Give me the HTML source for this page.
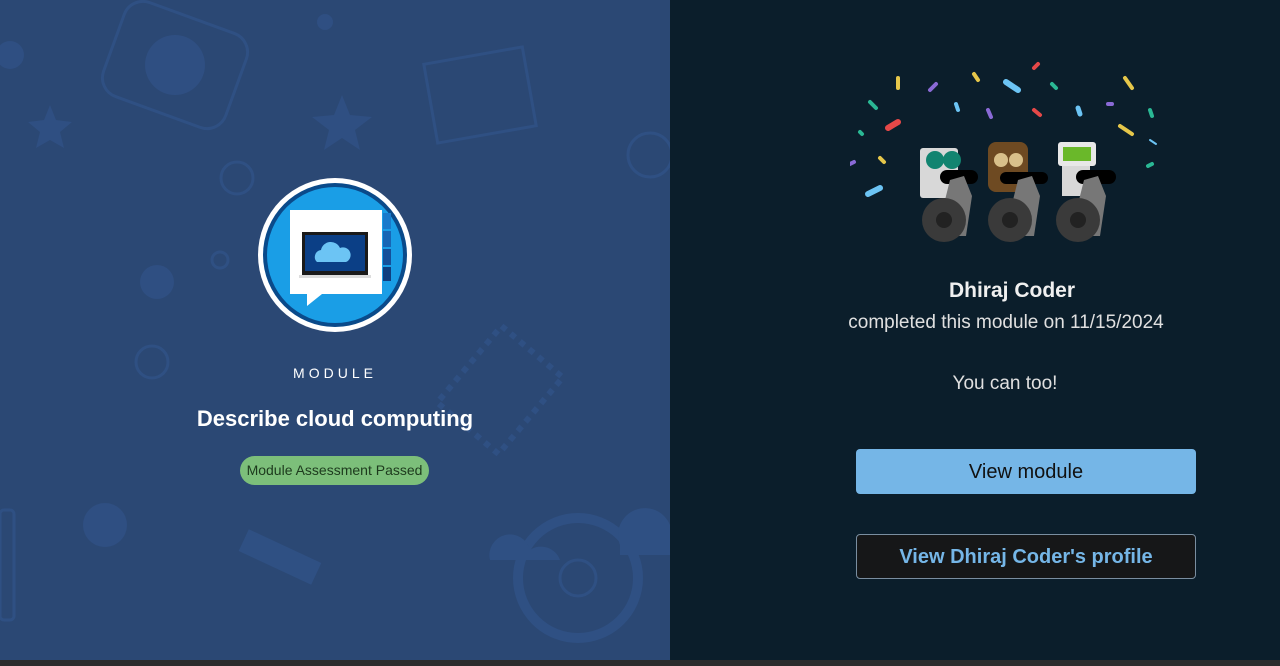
<!DOCTYPE html>
<html><head><meta charset="utf-8"><style>
*{margin:0;padding:0;box-sizing:border-box}
body{width:1280px;height:666px;overflow:hidden;background:#0b1e2b;font-family:"Liberation Sans",sans-serif;position:relative}
.left{position:absolute;left:0;top:0;width:670px;height:660px;background:#2b4874;overflow:hidden}
.right{position:absolute;left:670px;top:0;width:610px;height:660px;background:#0b1e2b}
.bot{position:absolute;left:0;top:660px;width:1280px;height:6px;background:#2b2b2d}
.c{position:absolute;text-align:center;color:#fff}
.btn{position:absolute;left:856px;width:340px;height:45px;border-radius:4px;text-align:center;line-height:47px;font-size:20px}
</style></head><body>
<div class="left">
<svg width="670" height="660" style="position:absolute;left:0;top:0" fill="none" stroke="#2f5083" stroke-width="3">
<rect x="110" y="15" width="130" height="100" rx="20" transform="rotate(20 175 65)"/>
<circle cx="175" cy="65" r="30" fill="#2f4f82" stroke="none"/>
<rect x="430" y="55" width="100" height="80" transform="rotate(-10 480 95)"/>
<circle cx="650" cy="155" r="22"/><circle cx="237" cy="178" r="16"/><circle cx="152" cy="362" r="16"/>
<circle cx="220" cy="260" r="8"/>
<circle cx="578" cy="578" r="60" stroke-width="10"/><circle cx="578" cy="578" r="18"/>
<circle cx="105" cy="525" r="22" fill="#2f4f82" stroke="none"/>
<circle cx="157" cy="282" r="17" fill="#2f4f82" stroke="none"/>
<circle cx="10" cy="55" r="14" fill="#2f4f82" stroke="none"/>
<circle cx="325" cy="22" r="8" fill="#2f4f82" stroke="none"/>
<polygon points="342,95 350,115 372,117 355,130 360,150 342,138 324,150 329,130 312,117 334,115" fill="#2f4f82" stroke="none"/>
<polygon points="50,105 56,120 72,122 60,132 64,148 50,140 36,148 40,132 28,122 44,120" fill="#2f4f82" stroke="none"/>
<rect x="240" y="545" width="80" height="24" fill="#2f5083" stroke="none" transform="rotate(25 280 557)"/>
<path d="M460 340 l80 0 l0 100 l-80 0 z" stroke-dasharray="6 6" stroke-width="6" transform="rotate(40 500 390)"/>
<path d="M490 560 a20 20 0 0 1 40 -10 a20 20 0 0 1 30 10 z M620 545 a22 22 0 0 1 50 -20 l0 30 l-50 0 z" fill="#2f5083" stroke="none"/>
<rect x="0" y="510" width="14" height="110" rx="4"/>
</svg>
<svg width="156" height="156" viewBox="0 0 156 156" style="position:absolute;left:257px;top:177px">
<circle cx="78" cy="78" r="77" fill="#fff"/><circle cx="78" cy="78" r="72" fill="#0a4a8a"/><circle cx="78" cy="78" r="68" fill="#1a9ee6"/>
<rect x="126" y="36" width="8" height="16" fill="#1a7acb"/><rect x="126" y="54" width="8" height="16" fill="#1766b5"/><rect x="126" y="72" width="8" height="16" fill="#14509a"/><rect x="126" y="90" width="8" height="14" fill="#0f3f80"/>
<path d="M33 33 h92 v84 h-60 l-15 12 v-12 h-17 z" fill="#fff"/>
<rect x="45" y="55" width="66" height="43" fill="#1a1a1a"/><rect x="48" y="58" width="60" height="36" fill="#0b3f86"/>
<path d="M60 85 a7 7 0 0 1 4-12 a10 10 0 0 1 19-2 a7 7 0 0 1 6 14 z" fill="#6cc4f4"/>
<rect x="42" y="98" width="72" height="3" fill="#ddd"/>
</svg>
<div class="c" style="left:0;width:670px;top:365px;font-size:14px;letter-spacing:4px">MODULE</div>
<div class="c" style="left:0;width:670px;top:406px;font-size:22px;font-weight:bold">Describe cloud computing</div>
<div style="position:absolute;left:240px;top:456px;width:189px;height:29px;border-radius:15px;background:#7cbf7a;color:#1d3a1d;font-size:14px;text-align:center;line-height:29px">Module Assessment Passed</div>
</div>
<div class="right">
<svg width="320" height="190" style="position:absolute;left:180px;top:60px">
<g stroke-linecap="round" stroke-width="4">
<line x1="48" y1="18" x2="48" y2="28" stroke="#e6c74a"/><line x1="80" y1="30" x2="86" y2="24" stroke="#8a6ad6"/>
<line x1="124" y1="14" x2="128" y2="20" stroke="#e6c74a"/><line x1="156" y1="22" x2="168" y2="30" stroke="#6cc4f4" stroke-width="6"/>
<line x1="184" y1="8" x2="188" y2="4" stroke="#e54848"/><line x1="202" y1="24" x2="206" y2="28" stroke="#2ab894"/>
<line x1="20" y1="42" x2="26" y2="48" stroke="#2ab894"/><line x1="106" y1="44" x2="108" y2="50" stroke="#6cc4f4"/>
<line x1="138" y1="50" x2="141" y2="57" stroke="#8a6ad6"/><line x1="184" y1="50" x2="190" y2="55" stroke="#e54848"/>
<line x1="228" y1="48" x2="230" y2="54" stroke="#6cc4f4" stroke-width="5"/><line x1="258" y1="44" x2="262" y2="44" stroke="#8a6ad6"/>
<line x1="275" y1="18" x2="282" y2="28" stroke="#e6c74a"/><line x1="300" y1="50" x2="302" y2="56" stroke="#2ab894"/>
<line x1="38" y1="68" x2="48" y2="62" stroke="#e54848" stroke-width="6"/><line x1="270" y1="66" x2="282" y2="74" stroke="#e6c74a"/>
<line x1="10" y1="72" x2="12" y2="74" stroke="#2ab894"/><line x1="30" y1="98" x2="34" y2="102" stroke="#e6c74a"/>
<line x1="0" y1="104" x2="4" y2="102" stroke="#8a6ad6"/><line x1="18" y1="134" x2="30" y2="128" stroke="#6cc4f4" stroke-width="6"/>
<line x1="298" y1="106" x2="302" y2="104" stroke="#2ab894"/><line x1="300" y1="80" x2="306" y2="84" stroke="#6cc4f4" stroke-width="2"/>
</g>
<g>
<rect x="70" y="88" width="38" height="50" rx="3" fill="#d8d8d8"/><circle cx="85" cy="100" r="9" fill="#128470"/><circle cx="102" cy="100" r="9" fill="#128470"/>
<rect x="90" y="110" width="38" height="14" rx="7" fill="#000"/><path d="M100 120 l14 -4 l8 20 l-6 40 l-30 0 z" fill="#777"/>
<circle cx="94" cy="160" r="22" fill="#3a3a3a"/><circle cx="94" cy="160" r="8" fill="#222"/>
<rect x="138" y="82" width="40" height="50" rx="8" fill="#6e4a22"/><circle cx="151" cy="100" r="7" fill="#d9c08a"/><circle cx="166" cy="100" r="7" fill="#d9c08a"/>
<rect x="150" y="112" width="48" height="12" rx="6" fill="#000"/><path d="M168 120 l14 -4 l8 20 l-6 40 l-30 0 z" fill="#777"/>
<circle cx="160" cy="160" r="22" fill="#3a3a3a"/><circle cx="160" cy="160" r="8" fill="#222"/>
<rect x="208" y="82" width="38" height="24" rx="3" fill="#e8e8e8"/><rect x="213" y="87" width="28" height="14" fill="#6ab82a"/>
<rect x="212" y="106" width="28" height="30" fill="#d8d8d8"/><rect x="226" y="110" width="40" height="14" rx="7" fill="#000"/>
<path d="M234 120 l14 -4 l8 20 l-6 40 l-30 0 z" fill="#777"/>
<circle cx="228" cy="160" r="22" fill="#3a3a3a"/><circle cx="228" cy="160" r="8" fill="#222"/>
</g></svg>
<div class="c" style="left:0;width:684px;top:279px;font-size:21px;font-weight:bold;color:#f0f0f0">Dhiraj Coder</div>
<div class="c" style="left:0;width:672px;top:312px;font-size:19px;color:#e0e0e0">completed this module on 11/15/2024</div>
<div class="c" style="left:0;width:670px;top:373px;font-size:19px;color:#e0e0e0">You can too!</div>
</div>
<div class="btn" style="top:449px;background:#75b6e7;color:#111">View module</div>
<div class="btn" style="top:534px;background:#161718;border:1px solid #7a8ea0;color:#75b6e7;line-height:45px;font-weight:bold">View Dhiraj Coder's profile</div>
<div class="bot"></div>
</body></html>
